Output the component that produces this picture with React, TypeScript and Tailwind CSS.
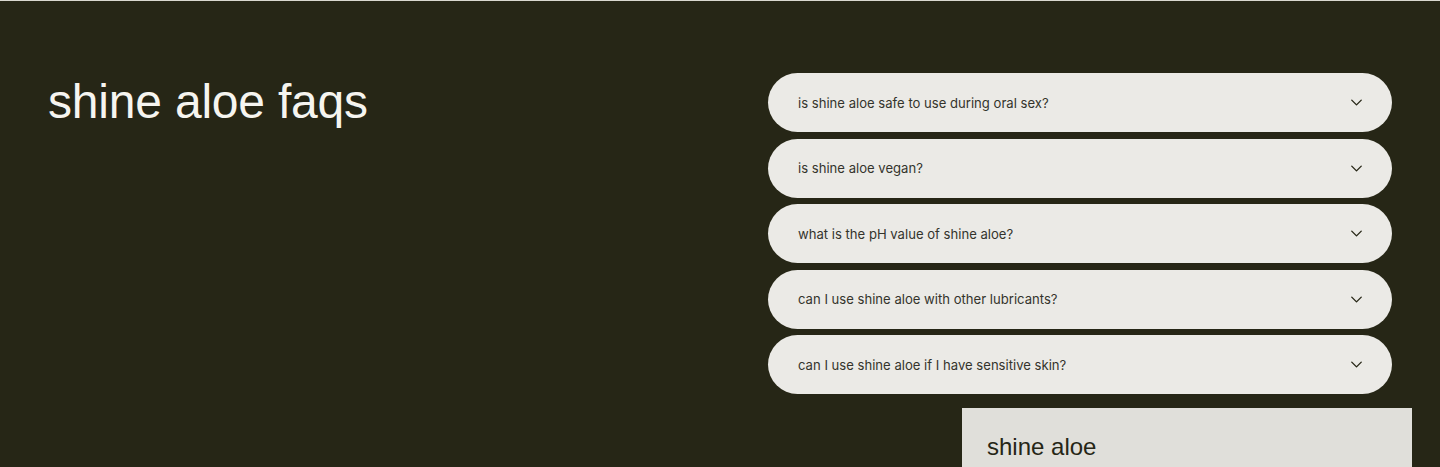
import { ChevronDown } from "lucide-react";

const faqs = [
  "is shine aloe safe to use during oral sex?",
  "is shine aloe vegan?",
  "what is the pH value of shine aloe?",
  "can I use shine aloe with other lubricants?",
  "can I use shine aloe if I have sensitive skin?",
];

const App = () => {
  return (
    <div className="relative h-[467px] overflow-hidden bg-[#262616] border-t border-[#d9d8d0]">
      <div className="flex px-12 pt-[72px]">
        <div className="w-[720px] shrink-0">
          <h2
            className="text-[48px] leading-[58px] text-[#f6f5f0] tracking-[-0.2px]"
            style={{ fontFamily: '"Liberation Sans", Arial, sans-serif' }}
          >
            shine aloe faqs
          </h2>
        </div>
        <div className="flex w-[624px] shrink-0 flex-col gap-[6.6px]">
          {faqs.map((q) => (
            <div
              key={q}
              className="flex h-[59px] items-center justify-between rounded-full bg-[#ebeae6] pl-[30px] pr-[26px]"
            >
              <span
                className="pt-[2px] text-[13.1px] text-[#34342c]"
                style={{ fontFamily: "Inter, sans-serif" }}
              >
                {q}
              </span>
              <ChevronDown size={19} strokeWidth={1.7} className="text-[#262616]" />
            </div>
          ))}
        </div>
      </div>
      <div className="absolute left-[962px] top-[407px] w-[450px] h-[80px] bg-[#e0dfda] px-[25px] pt-[25px]">
        <div
          className="text-[24px] leading-[28px] text-[#262616]"
          style={{ fontFamily: '"Liberation Sans", Arial, sans-serif' }}
        >
          shine aloe
        </div>
      </div>
    </div>
  );
};

export default App;
